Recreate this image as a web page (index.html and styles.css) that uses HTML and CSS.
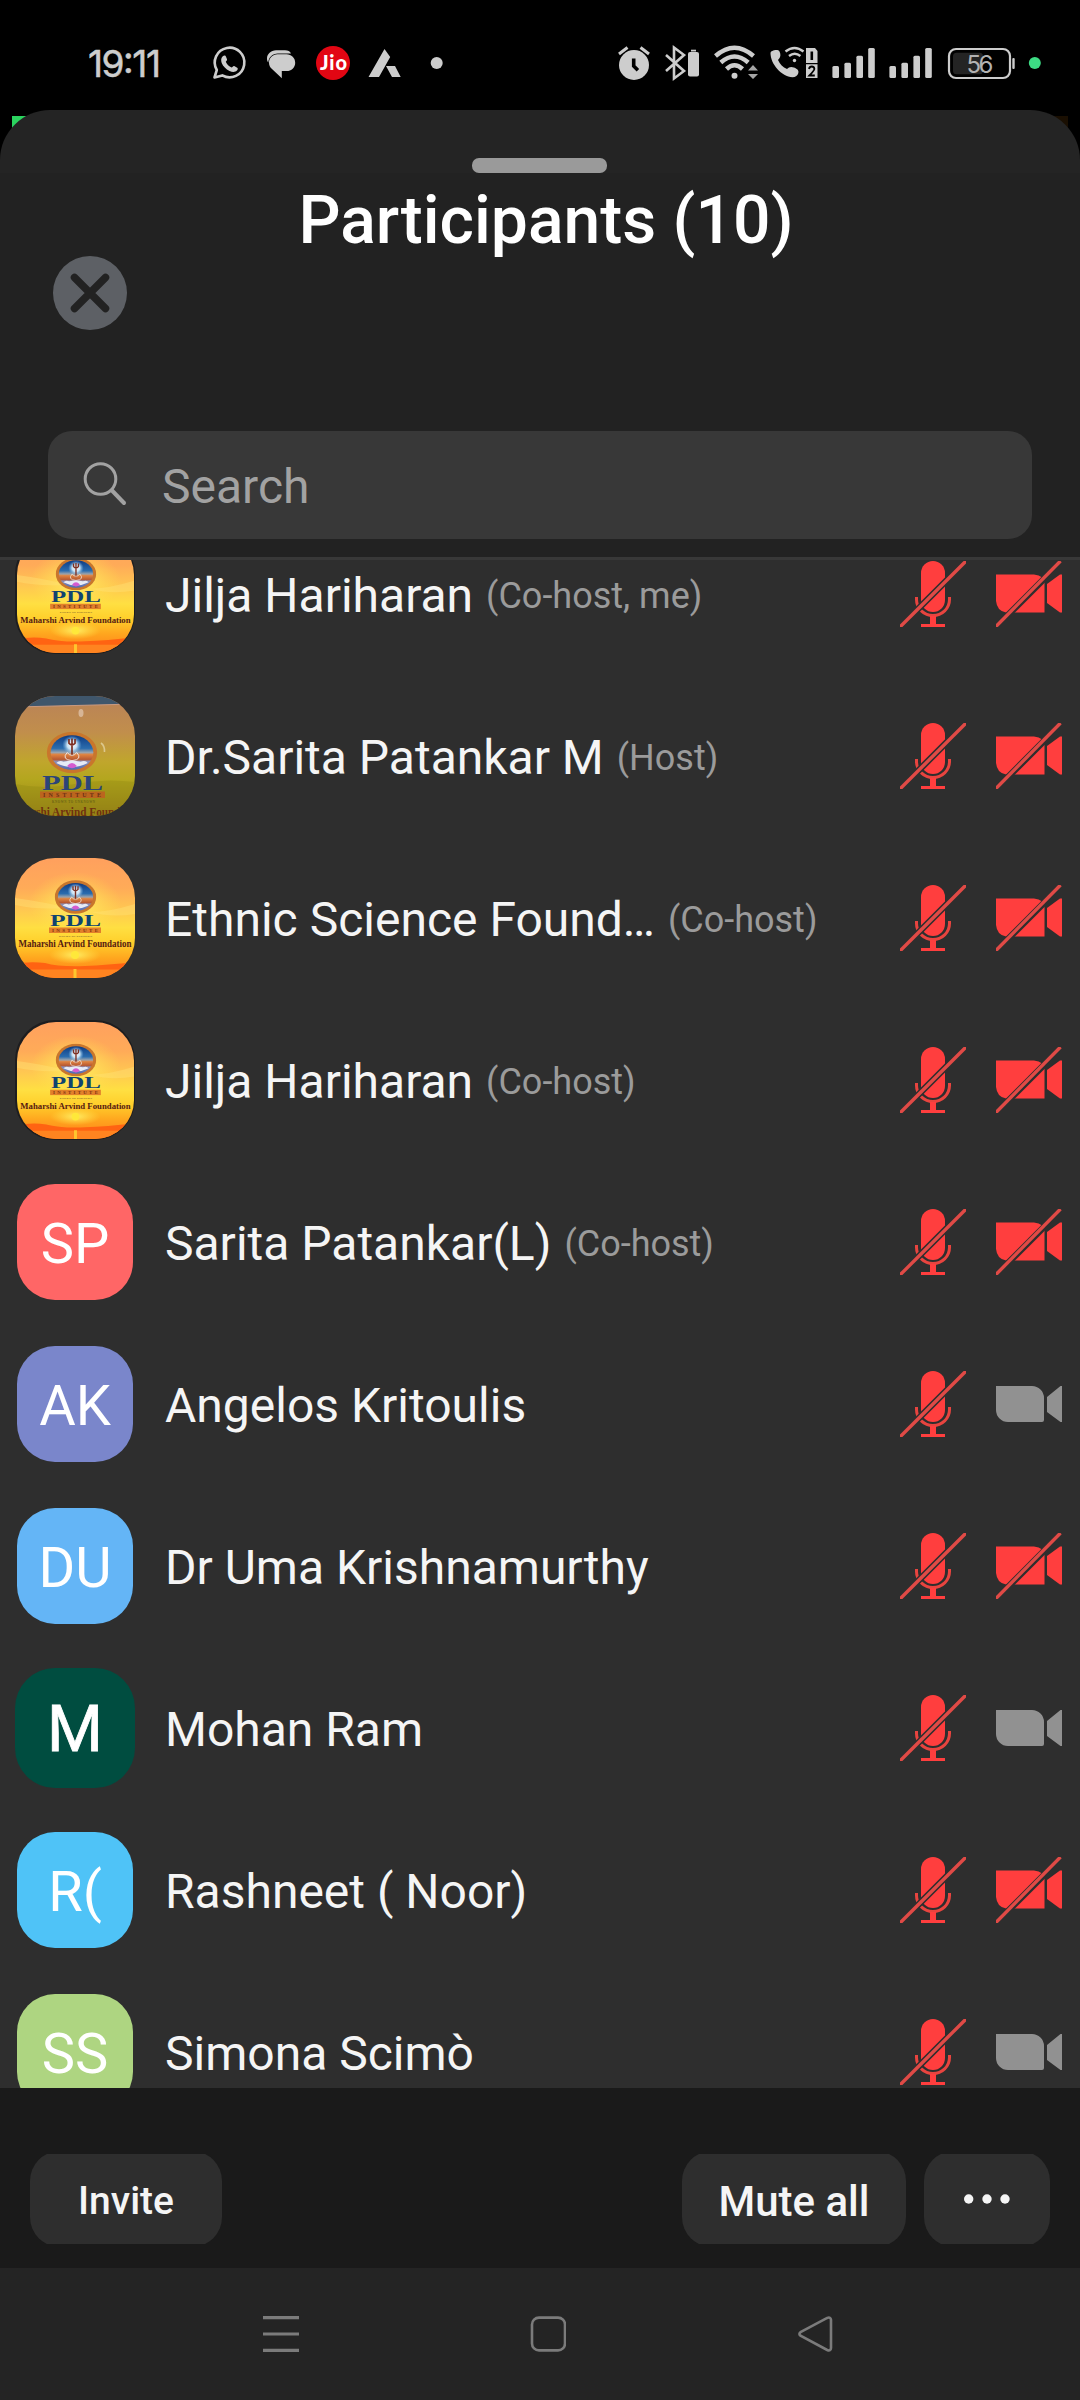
FILE: index.html
```html
<!DOCTYPE html>
<html lang="en">
<head>
<meta charset="utf-8">
<title>Participants</title>
<link rel="stylesheet" href="styles.css">
</head>
<body>
<svg class="defs" width="0" height="0" aria-hidden="true">
  <defs>
    <linearGradient id="sky" x1="0" y1="0" x2="0" y2="1">
      <stop offset="0" stop-color="#ffa05e"/><stop offset=".25" stop-color="#ffab58"/>
      <stop offset=".42" stop-color="#ffc652"/><stop offset=".58" stop-color="#ffdf42"/>
      <stop offset=".7" stop-color="#ffd02c"/><stop offset=".84" stop-color="#ffa51e"/><stop offset="1" stop-color="#ff7a1a"/>
    </linearGradient>
    <linearGradient id="dusk" x1="0" y1="0" x2="0" y2="1">
      <stop offset="0" stop-color="#b98258"/><stop offset=".3" stop-color="#c18e4c"/>
      <stop offset=".55" stop-color="#c0a62c"/><stop offset=".7" stop-color="#b3a61e"/><stop offset="1" stop-color="#977c18"/>
    </linearGradient>
    <radialGradient id="glow"><stop offset="0" stop-color="#fff36a" stop-opacity=".9"/><stop offset="1" stop-color="#ffe84a" stop-opacity="0"/></radialGradient>
    <radialGradient id="halo"><stop offset="0" stop-color="#fff"/><stop offset=".5" stop-color="#d8eefb" stop-opacity=".9"/><stop offset="1" stop-color="#6fb0e2" stop-opacity="0"/></radialGradient>
    <linearGradient id="globe" x1="0" y1="0" x2="0" y2="1">
      <stop offset="0" stop-color="#0f3c84"/><stop offset=".38" stop-color="#2a6cae"/>
      <stop offset=".5" stop-color="#9aa3ad"/><stop offset=".56" stop-color="#e08340"/><stop offset=".7" stop-color="#b85a32"/><stop offset=".76" stop-color="#8b8fb8"/><stop offset="1" stop-color="#4d69b4"/>
    </linearGradient>
    <clipPath id="tile"><rect width="120" height="120" rx="40"/></clipPath>
    <symbol id="emblem" viewBox="0 0 42 36" preserveAspectRatio="none">
      <ellipse cx="21" cy="18" rx="20.700" ry="17.700" fill="#c9762c"/>
      <ellipse cx="21" cy="18" rx="17.600" ry="14.800" fill="url(#globe)"/>
      <circle cx="21" cy="11.500" r="8" fill="url(#halo)"/>
      <path d="M21 6v15M18.500 6.500v3.500q2.500 3 5 0V6.500" stroke="#7d2f22" stroke-width="1.400" fill="none"/>
      <path d="M17 18q-5 6 4 7q9-1 4-7M17 18q4 5 8 0" stroke="#f0e6df" stroke-width=".8" fill="none"/>
      <path d="M8 27q3-3 6-1q7-2 14 0q4-2 6 1q-13 7-26 0z" fill="#e6eaf6"/>
      <path d="M17 29.500q4-5 8 0q-4 4-8 0z" fill="#d45bd0"/>
    </symbol>
    <symbol id="sunset" viewBox="0 0 120 120">
      <g clip-path="url(#tile)">
        <rect width="120" height="120" fill="url(#sky)"/>
        <ellipse cx="60" cy="46" rx="46" ry="32" fill="url(#glow)"/>
        <path d="M0 40q30 4 52 10q-30 2-52-3zM120 46q-26 8-44 8q20 6 44 2z" fill="#ffe477" opacity=".4"/>
        <ellipse cx="60" cy="97" rx="26" ry="9" fill="url(#glow)"/>
        <circle cx="60" cy="97" r="4" fill="#ffe83a"/>
        <path d="M0 106q14-3 30-1q14 4 40 3q22-1 50-4v9H0z" fill="#ff6312"/>
        <rect y="111.500" width="120" height="8.500" fill="#ff8420"/>
        <rect x="58.500" y="111" width="3" height="9" fill="#ffc62e"/>
        <use href="#emblem" x="39.500" y="22" width="42" height="34"/>
        <text class="serif" x="35" y="68" font-size="17.500" textLength="51" lengthAdjust="spacingAndGlyphs" fill="#0f4370">PDL</text>
        <rect x="34" y="69.500" width="52" height="5.500" fill="#e2802a"/>
        <text class="serif" x="37" y="74" font-size="5" textLength="46" fill="#7c3212">INSTITUTE</text>
        <text class="serif" x="44" y="79" font-size="2.600" textLength="33" fill="#77582a">KNOWN TO UNKNOWN</text>
        <text class="serif" x="3.500" y="89" font-size="9.300" textLength="113" lengthAdjust="spacingAndGlyphs" fill="#561b12">Maharshi Arvind Foundation</text>
      </g>
    </symbol>
    <symbol id="poster" viewBox="0 0 120 120">
      <g clip-path="url(#tile)">
        <rect width="120" height="120" fill="url(#dusk)"/>
        <path d="M0 0h120v8L0 11z" fill="#3f566b"/>
        <path d="M0 11L120 8" stroke="#c99a80" stroke-width="1"/>
        <path d="M0 88q30 6 60 0t60-2v34H0z" fill="#8f8a12" opacity=".35"/>
        <ellipse cx="66" cy="17" rx="2.500" ry="4" fill="#d7b596"/>
        <use href="#emblem" x="31.500" y="35.500" width="51" height="42"/>
        <path d="M86 47q4 3 3.500 9" stroke="#dcc78c" stroke-width="1.600" fill="none"/>
        <text class="serif" x="27" y="93.500" font-size="21.500" textLength="61" lengthAdjust="spacingAndGlyphs" fill="#2b4479">PDL</text>
        <rect x="25" y="95.500" width="65" height="6.500" fill="#bb651e"/>
        <text class="serif" x="28" y="101" font-size="6" textLength="58" fill="#6c3015">INSTITUTE</text>
        <text class="serif" x="37" y="107" font-size="3" textLength="43" fill="#6b6315">KNOWN TO UNKNOWN</text>
        <text class="serif" x="-12" y="120" font-size="11.500" textLength="142" lengthAdjust="spacingAndGlyphs" fill="#70310f">Maharshi Arvind Foundation</text>
      </g>
    </symbol>
    <mask id="slashCut" maskUnits="userSpaceOnUse" x="0" y="0" width="66" height="66">
      <rect width="66" height="66" fill="#fff"/><path d="M-2 68L68-2" stroke="#000" stroke-width="6.500"/>
    </mask>
    <symbol id="mic-off" viewBox="0 0 66 66">
      <g mask="url(#slashCut)">
        <rect x="21" y="0" width="24" height="51" rx="12" fill="#ff3e3e"/>
        <path d="M16.500 36v2.500a16.500 16 0 0 0 33 0V36" fill="none" stroke="#e8443f" stroke-width="3"/>
        <path d="M30 55h6v8h9v3H21v-3h9z" fill="#ff3e3e"/>
      </g>
      <path d="M-2 68L68-2" stroke="#e04a46" stroke-width="3.400"/>
    </symbol>
    <symbol id="video-off" viewBox="0 0 66 66">
      <g mask="url(#slashCut)" fill="#ff3e3e">
        <path d="M0 13.500h38q10.500 1 10.500 9V51.500H10Q1 50 0 40z"/>
        <path d="M66 13.500h-2L51 23v19l13 9.500h2z"/>
      </g>
      <path d="M-2 67.500L64.500 0" stroke="#e04a46" stroke-width="3.400"/>
    </symbol>
    <symbol id="video-on" viewBox="0 0 66 66">
      <path d="M0 15h36a12 12 0 0 1 12 12v22q0 2-2 2H12A12 12 0 0 1 0 39zM66 15h-1.500L51 26v15l13.500 10H66z" fill="#919191"/>
    </symbol>
  </defs>
</svg>

<div class="screen">
  <header class="status">
    <svg class="status-left" width="420" height="70" viewBox="60 28 420 70">
      <text class="clock" x="88" y="77" textLength="73">19:11</text>
      <g fill="none" stroke="#cdcdcd" stroke-width="2.600">
        <path d="M214.500 77.500l2.300-7.500a14.800 14.800 0 1 1 5.500 5.400z" stroke-linejoin="round"/>
      </g>
      <path d="M223 56c1.500-1 2.600-.5 3 .7l1 2.500c.4 1-.9 2-1.200 2.600.9 2.400 3.300 4.700 5.800 5.800.8-.4 1.700-1.900 2.600-1.500l3 1.600c1 .6.500 2-.3 2.900-2 2-4.600 1.700-7.400.3-3.600-1.800-6.400-4.600-7.800-8-.9-2.600-.7-5.200 1.300-6.900z" fill="#cdcdcd"/>
      <path d="M291 53.500c-1-2-3-3.200-6-3.200h-9c-5 0-9 3.700-9 8.200 0 2 .5 3 1.300 4 .2-5 4-9 9.700-9z" fill="#cdcdcd"/>
      <path d="M277.500 54.300h9c5 0 8.700 3.700 8.700 8.400s-3.700 8.300-8.700 8.300h-4.700v7.200L272 69c-2-1.700-3-3.800-3-6.300 0-4.700 3.700-8.400 8.500-8.400z" fill="#cdcdcd"/>
      <circle cx="333" cy="63" r="17" fill="#e20613"/>
      <text class="jio" x="320" y="69.500" textLength="27">Jio</text>
      <path d="M368.500 77L384.500 49l5.700 8L379 77zM386 66h9l5.700 11H392z" fill="#cdcdcd"/>
      <circle cx="436.700" cy="63" r="6" fill="#cdcdcd"/>
    </svg>
    <svg class="status-right" width="440" height="70" viewBox="610 28 440 70" fill="#cdcdcd">
      <circle cx="634" cy="65" r="15"/>
      <path d="M619 54l8.500-6.500M640.500 47.500L649 54" stroke="#cdcdcd" stroke-width="3"/>
      <path d="M633.700 58.500v7.500l4.200 4.200" stroke="#000" stroke-width="3.600" fill="none"/>
      <path d="M666 55l18 16-10 7.500V47.500L684 55 666 71" fill="none" stroke="#cdcdcd" stroke-width="2.600"/>
      <rect x="688" y="52" width="11" height="24.500" rx="2"/><rect x="691" y="49.700" width="5" height="1.800"/>
      <g fill="none" stroke="#cdcdcd" stroke-width="4.500">
        <path d="M715.500 56q19-16.500 38 0M720.800 62.500q13.700-12 27.400 0M726.500 69q8-7.500 16 0"/>
      </g>
      <circle cx="734.500" cy="75.700" r="3"/>
      <path d="M748 70.500l5-5.500 5 5.500zM748 74l5 5 5-5z" fill="#a5a5a5"/>
      <path d="M770.500 53c0-2.500 7.500-4.500 9-1.500 1.500 3 1.300 6-1.500 8.500 2 4.500 4.800 7 9 9 2-2 4-2.600 7-1.400 3.500 1.400 5.500 3.400 4 6.400-1 2-2.500 3.200-5.500 3.200-11-.8-22-13-22-24.200z"/>
      <path d="M785.500 51.500q9-7 18 0M789 56q5.700-4.500 11.400 0" fill="none" stroke="#cdcdcd" stroke-width="2.400"/><circle cx="794.500" cy="60.500" r="1.700"/>
      <path d="M806 48h9l2.500 3v12H806zM806 64.200h11.500V78H806z"/>
      <path d="M811.800 51.500v8.500" stroke="#000" stroke-width="2.600"/>
      <path d="M809 69q.5-2.500 2.800-2.500t2.600 2.300q0 1.700-5 6.700h5.400" fill="none" stroke="#000" stroke-width="1.800"/>
      <g id="bars"><rect x="832.400" y="66" width="6.600" height="12" rx="1.500"/><rect x="844.400" y="62.700" width="6.600" height="15.300" rx="1.500"/><rect x="856.400" y="55.700" width="6.600" height="22.300" rx="1.500"/><rect x="868.200" y="48" width="6.600" height="30" rx="1.500"/></g>
      <use href="#bars" x="57"/>
      <rect x="949" y="49" width="61" height="29" rx="7" fill="none" stroke="#cdcdcd" stroke-width="2.200"/>
      <rect x="953" y="52.700" width="30" height="21.500" rx="3.500" fill="#242424"/>
      <rect x="1012.300" y="58" width="2.400" height="11" rx="1"/>
      <text class="battery" x="966.500" y="72.500" textLength="27">56</text>
      <circle cx="1034.800" cy="63" r="6" fill="#3ddc84"/>
    </svg>
  </header>

  <div class="backdrop">
    <main class="sheet">
      <div class="grip"></div>
      <section class="head">
        <h1 class="title">Participants (10)</h1>
        <svg class="close" width="74" height="74" viewBox="0 0 74 74"><circle cx="37" cy="37" r="37" fill="#5d6065"/><path d="M21.500 21.500l31 31M52.500 21.500l-31 31" stroke="#222" stroke-width="7.500" stroke-linecap="round"/></svg>
        <div class="search">
          <svg width="44" height="46" viewBox="0 0 44 46" fill="none" stroke="#a2a2a2" stroke-linecap="round"><circle cx="17.500" cy="18" r="15.300" stroke-width="3"/><path d="M29 29.500L41 42" stroke-width="4"/></svg>
          <span>Search</span>
        </div>
      </section>
      <div class="viewport">
        <ul class="list">
          <li class="row"><svg class="avatar shaded" viewBox="-2 -2 123 123"><use href="#sunset" width="120" height="120"/></svg><span class="name">Jilja Hariharan</span><span class="role">(Co-host, me)</span><svg class="mic"><use href="#mic-off"/></svg><svg class="video"><use href="#video-off"/></svg></li>
          <li class="row"><svg class="avatar"><use href="#poster"/></svg><span class="name">Dr.Sarita Patankar M</span><span class="role">(Host)</span><svg class="mic"><use href="#mic-off"/></svg><svg class="video"><use href="#video-off"/></svg></li>
          <li class="row"><svg class="avatar"><use href="#sunset"/></svg><span class="name">Ethnic Science Found…</span><span class="role">(Co-host)</span><svg class="mic"><use href="#mic-off"/></svg><svg class="video"><use href="#video-off"/></svg></li>
          <li class="row"><svg class="avatar shaded" viewBox="-2 -2 123 123"><use href="#sunset" width="120" height="120"/></svg><span class="name">Jilja Hariharan</span><span class="role">(Co-host)</span><svg class="mic"><use href="#mic-off"/></svg><svg class="video"><use href="#video-off"/></svg></li>
          <li class="row"><span class="initials coral">SP</span><span class="name">Sarita Patankar(L)</span><span class="role">(Co-host)</span><svg class="mic"><use href="#mic-off"/></svg><svg class="video"><use href="#video-off"/></svg></li>
          <li class="row"><span class="initials indigo">AK</span><span class="name">Angelos Kritoulis</span><svg class="mic"><use href="#mic-off"/></svg><svg class="video"><use href="#video-on"/></svg></li>
          <li class="row"><span class="initials blue">DU</span><span class="name">Dr Uma Krishnamurthy</span><svg class="mic"><use href="#mic-off"/></svg><svg class="video"><use href="#video-off"/></svg></li>
          <li class="row"><span class="initials pine">M</span><span class="name">Mohan Ram</span><svg class="mic"><use href="#mic-off"/></svg><svg class="video"><use href="#video-on"/></svg></li>
          <li class="row"><span class="initials sky">R(</span><span class="name">Rashneet ( Noor)</span><svg class="mic"><use href="#mic-off"/></svg><svg class="video"><use href="#video-off"/></svg></li>
          <li class="row"><span class="initials lime">SS</span><span class="name">Simona Scimò</span><svg class="mic"><use href="#mic-off"/></svg><svg class="video"><use href="#video-on"/></svg></li>
        </ul>
      </div>
    </main>
  </div>

  <footer class="actions">
    <button class="btn invite"><span>Invite</span></button>
    <button class="btn mute"><span>Mute all</span></button>
    <button class="btn more"><svg width="48" height="12" viewBox="0 0 48 12" fill="#f5f5f5"><circle cx="5.700" cy="6" r="4.700"/><circle cx="24" cy="6" r="4.700"/><circle cx="42" cy="6" r="4.700"/></svg></button>
  </footer>
  <nav class="system">
    <svg width="36" height="40" viewBox="0 0 36 40" stroke="#7b7b7b" stroke-width="3.200"><path d="M0 3.700h36M0 20h36M0 36.300h36"/></svg>
    <svg width="36" height="40" viewBox="0 0 36 40" fill="none" stroke="#7b7b7b" stroke-width="2.600"><rect x="2" y="3.600" width="33" height="32.800" rx="7"/></svg>
    <svg width="36" height="40" viewBox="0 0 36 40" fill="none" stroke="#7b7b7b" stroke-width="2.600"><path d="M3.500 18.200L30.200 3.900q3.600-1.200 3.800 2v28q-.2 3.600-3.800 2.100L3.500 21.700q-2.200-1.700 0-3.500z"/></svg>
  </nav>
</div>
</body>
</html>
```
FILE: styles.css
```css
* { box-sizing: border-box; }
body { margin: 0; background: #000; font-family: Roboto, "Noto Sans", sans-serif; }
.defs { display: block; height: 0; }
.screen { width: 1080px; height: 2400px; display: flex; flex-direction: column; overflow: hidden; }
.status { height: 110px; padding: 28px 30px 0 60px; display: flex; justify-content: space-between; align-items: flex-start; background: #000; }
.clock { font-family: Inter, sans-serif; font-size: 37px; fill: #cdcdcd; stroke: #cdcdcd; stroke-width: .5px; }
.jio { font-family: Lato, sans-serif; font-weight: 900; font-size: 20px; fill: #fff; }
.battery { font-family: Inter, sans-serif; font-size: 24px; fill: #b2b2b2; }
.serif { font-family: "Liberation Serif", serif; font-weight: 700; }

/* Strips of the call window show behind the sheet's rounded corners. */
.backdrop {
  height: 1978px;
  background:
    linear-gradient(#2bd45f, #2bd45f) 12px 6px / 30px 20px no-repeat,
    linear-gradient(#1a0f02, #1a0f02) 1038px 6px / 30px 20px no-repeat,
    #000;
}
.sheet { height: 100%; display: flex; flex-direction: column; border-radius: 50px 50px 0 0; overflow: hidden; background: #242424; }
.grip { flex: none; width: 135px; height: 15px; margin: 48px 0 0 472px; border-radius: 7px; background: #9a9a9a; }
.head { flex: none; height: 387px; padding: 9px 48px 0; background: #222; border-bottom: 3px solid #383838; }
.title { margin: 0; padding-left: 12px; text-align: center; font-size: 66px; line-height: 78px; font-weight: 500; color: #fff; }
.close { display: block; margin: -4px 0 101px 5px; }
.search { height: 108px; padding-left: 35px; display: flex; align-items: center; gap: 35px; border-radius: 24px; background: #383838; color: #a2a2a2; font-size: 48px; }
.search svg { margin-top: -3px; }
.search span { padding-top: 3px; }
.viewport { flex: 1; min-height: 0; overflow: hidden; background: #2e2e2e; }
.list { list-style: none; margin: -47px 0 0; padding: 0; }
.row { height: 162px; padding: 0 18px 0 15px; display: flex; align-items: center; color: #f5f5f5; }
.avatar { width: 120px; height: 120px; flex: none; margin-right: 30px; }
.shaded { border-radius: 40px; background: #1d1d1f; }
.initials { flex: none; width: 116px; height: 116px; margin: 0 32px 0 2px; padding-top: 3px; border-radius: 38px; display: flex; align-items: center; justify-content: center; color: #fff; font-size: 56px; }
.coral { background: #ff6666; }
.indigo { background: #7a86cb; }
.blue { background: #64b5f6; }
.pine { width: 120px; height: 120px; margin: 0 30px 0 0; border-radius: 40px; background: #004d40; font-size: 64px; -webkit-text-stroke: .8px #fff; }
.sky { background: #4fc3f7; }
.lime { background: #aed581; }
.name { padding-top: 3px; font-size: 48px; white-space: nowrap; }
.role { padding-top: 3px; margin-left: 13px; font-size: 36px; color: #9b9b9b; white-space: nowrap; }
.mic { width: 66px; height: 66px; margin-left: auto; flex: none; }
.video { width: 66px; height: 66px; margin-left: 30px; flex: none; }

.actions { height: 180px; padding: 66px 30px 24px; display: flex; background: #1a1a1a; }
/* Rounded plate is slightly taller than the button, so its corners are cut flat. */
.btn { height: 90px; padding: 0; border: 0; display: flex; align-items: center; clip-path: inset(0); background: none; font-family: inherit; font-weight: 500; color: #f5f5f5; }
.btn span, .btn svg { flex: none; display: block; width: 100%; height: 96px; margin: -3px 0; border-radius: 30px; background: #2e2e2e; }
.btn span { padding-top: 2px; line-height: 97px; text-align: center; }
.btn svg { padding: 42px 39px; }
.invite { width: 192px; font-size: 39px; }
.mute { width: 224px; margin-left: auto; font-size: 42px; }
.more { width: 126px; margin-left: 18px; }

.system { height: 132px; padding: 0 247px 0 263px; display: flex; justify-content: space-between; align-items: center; background: #242424; }
```
